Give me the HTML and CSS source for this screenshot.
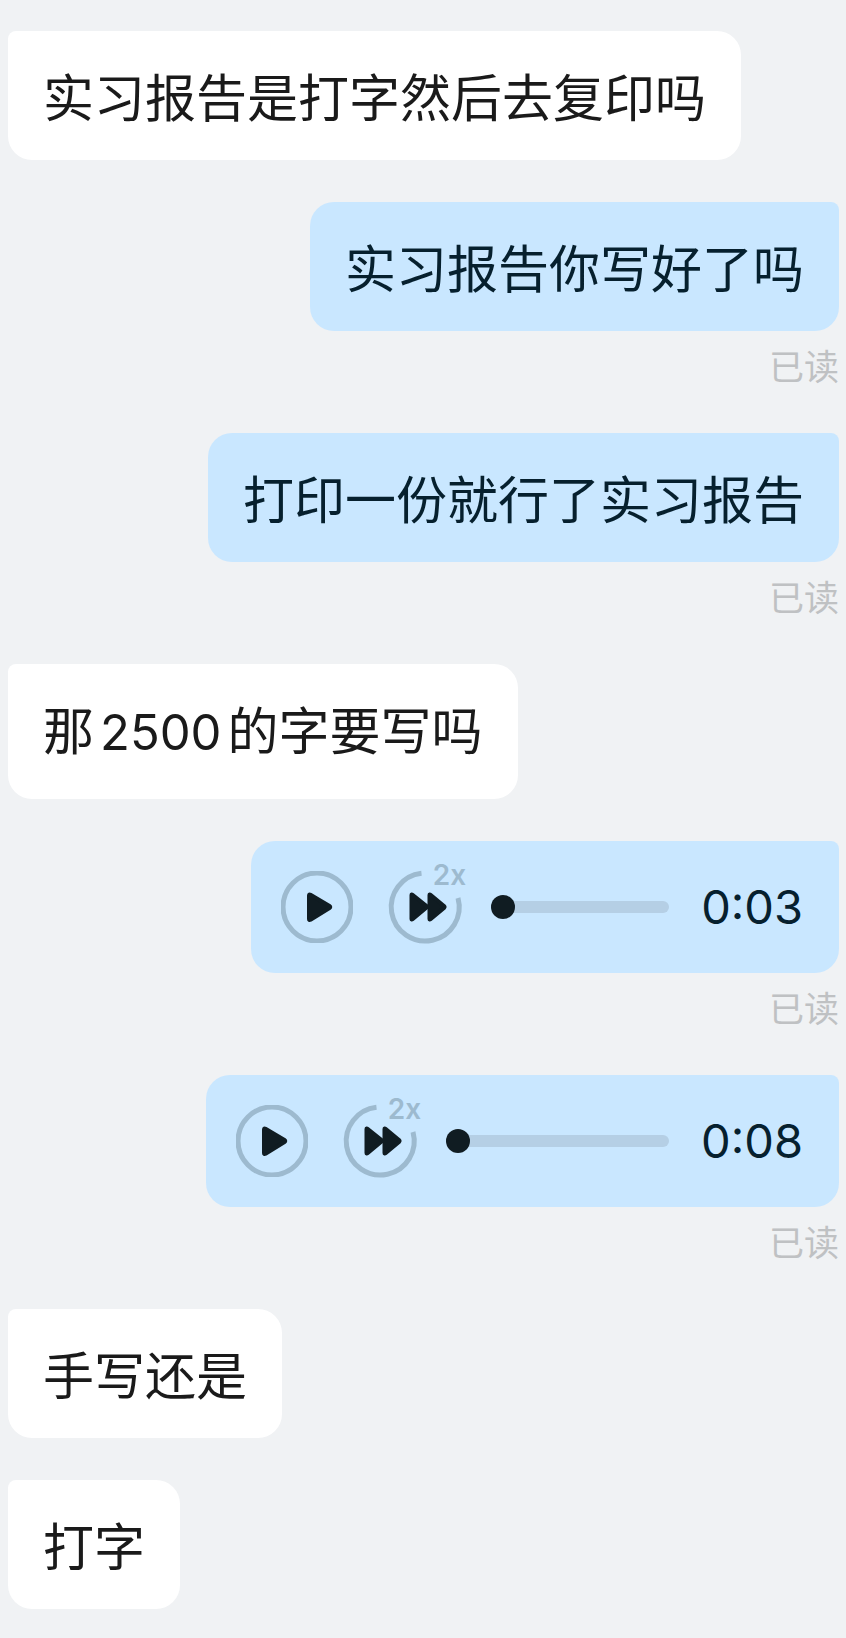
FILE: index.html
```html
<!DOCTYPE html>
<html lang="zh-CN">
<head>
    <meta charset="UTF-8">
    <meta name="viewport" content="width=device-width, initial-scale=1.0">
    <title>聊天</title>
    <link rel="stylesheet" href="styles.css">
</head>
<body>
    <!-- shared icons -->
    <svg class="sprite" aria-hidden="true">
        <symbol id="icon-play" viewBox="0 0 72 72">
            <circle class="ring" cx="36" cy="36" r="34"/>
            <path class="solid" d="M28 24.5 Q28 23 29.5 23.8 L48.5 35 Q50 36 48.5 37 L29.5 48.8 Q28 49.5 28 48 Z"/>
        </symbol>
        <symbol id="icon-speed" viewBox="0 0 72 72" overflow="visible">
            <path class="ring" d="M32.5 2.2 A34 34 0 1 0 69 27"/>
            <path class="solid" d="M22.5 24 Q22.5 23 23.5 23.8 L38.5 35.8 L23.5 48.2 Q22.5 49 22.5 48 Z"/>
            <path class="solid" d="M40.5 24 Q40.5 23 41.5 23.8 L55 35 Q56 36 55 37 L41.5 48.2 Q40.5 49 40.5 48 Z"/>
        </symbol>
    </svg>

    <main class="chat">
        <div class="message">
            <p class="bubble">实习报告是打字然后去复印吗</p>
        </div>

        <div class="message mine">
            <p class="bubble">实习报告你写好了吗</p>
            <span class="status">已读</span>
        </div>

        <div class="message mine">
            <p class="bubble">打印一份就行了实习报告</p>
            <span class="status">已读</span>
        </div>

        <div class="message">
            <p class="bubble mixed">那<span class="number">2500</span>的字要写吗</p>
        </div>

        <div class="message mine">
            <div class="bubble voice">
                <button class="icon-btn" type="button" aria-label="播放">
                    <svg><use href="#icon-play"/></svg>
                </button>
                <button class="icon-btn" type="button">
                    <svg><use href="#icon-speed"/></svg>
                    <span class="rate">2x</span>
                </button>
                <input class="progress" type="range" min="0" max="3" value="0" aria-label="播放进度" style="width: 178px">
                <span class="time">0:03</span>
            </div>
            <span class="status">已读</span>
        </div>

        <div class="message mine">
            <div class="bubble voice">
                <button class="icon-btn" type="button" aria-label="播放">
                    <svg><use href="#icon-play"/></svg>
                </button>
                <button class="icon-btn" type="button">
                    <svg><use href="#icon-speed"/></svg>
                    <span class="rate">2x</span>
                </button>
                <input class="progress" type="range" min="0" max="8" value="0" aria-label="播放进度" style="width: 223px">
                <span class="time">0:08</span>
            </div>
            <span class="status">已读</span>
        </div>

        <div class="message">
            <p class="bubble">手写还是</p>
        </div>

        <div class="message">
            <p class="bubble">打字</p>
        </div>
    </main>
</body>
</html>
```
FILE: styles.css
```css
:root {
    --background: #F0F2F4;
    --bubble: #FFFFFF;
    --bubble-mine: #C9E7FF;
    --text: #1A1A1A;
    --text-mine: #06202E;
    --icon: #101C22;
    --ring: #9DBACF;
    --track: #B5CFE5;
    --status: #BFC1C3;
}

* {
    margin: 0;
    padding: 0;
    box-sizing: border-box;
}

body {
    font-family: Inter, "Noto Sans CJK SC", sans-serif;
    background-color: var(--background);
    color: var(--text);
    min-height: 100vh;
}

.sprite {
    position: absolute;
    width: 0;
    height: 0;
}

.chat {
    display: flex;
    flex-direction: column;
    gap: 42px;
    padding: 31px 7px 29px 8px;
}

.message {
    display: flex;
    flex-direction: column;
    align-items: flex-start;
}

.message.mine {
    align-items: flex-end;
}

.bubble {
    background-color: var(--bubble);
    border-radius: 8px 24px 24px 24px;
    padding: 32px 35px;
    font-family: "Noto Sans CJK SC", sans-serif;
    font-size: 51px;
    line-height: 65px;
}

.mine .bubble {
    background-color: var(--bubble-mine);
    border-radius: 24px 8px 24px 24px;
    color: var(--text-mine);
}

.bubble.mixed {
    padding-bottom: 38px;
}

.number {
    margin: 0 6px;
    font-family: Inter, sans-serif;
    font-size: 49px;
    line-height: 1;
}

.status {
    margin-top: 12px;
    font-size: 35px;
    line-height: 48px;
    color: var(--status);
}

.bubble.voice {
    display: flex;
    align-items: center;
    padding: 30px 36px 30px 30px;
    font-family: Inter, sans-serif;
}

.icon-btn {
    position: relative;
    flex: none;
    width: 72px;
    height: 72px;
    margin-right: 36px;
    border: none;
    background: none;
}

.icon-btn + .progress {
    margin-left: -6px;
}

.icon-btn svg {
    display: block;
    width: 72px;
    height: 72px;
    overflow: visible;
}

.ring {
    fill: none;
    stroke: var(--ring);
    stroke-width: 5;
}

.solid {
    fill: var(--icon);
    stroke: var(--icon);
    stroke-width: 4;
    stroke-linejoin: round;
}

.rate {
    position: absolute;
    top: -12px;
    right: -5px;
    font-family: Inter, sans-serif;
    font-size: 28px;
    font-weight: 600;
    line-height: 32px;
    color: var(--ring);
}

.progress {
    -webkit-appearance: none;
    appearance: none;
    height: 24px;
    margin-right: 32px;
    background: none;
}

.progress::-webkit-slider-runnable-track {
    height: 12px;
    border-radius: 6px;
    background: var(--track);
}

.progress::-webkit-slider-thumb {
    -webkit-appearance: none;
    width: 24px;
    height: 24px;
    margin-top: -6px;
    border-radius: 50%;
    background: var(--icon);
}

.time {
    font-size: 47px;
    line-height: 72px;
}

@media (max-width: 720px) {
    .bubble {
        font-size: 32px;
        line-height: 44px;
        padding: 20px 24px;
    }

    .number {
        font-size: 30px;
    }

    .progress {
        min-width: 40px;
        flex-shrink: 1;
    }

    .time {
        font-size: 32px;
    }
}
```
